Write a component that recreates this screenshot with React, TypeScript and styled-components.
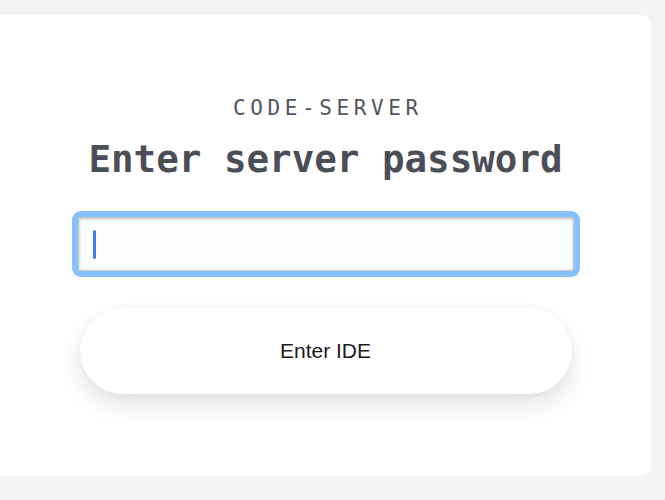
import React from "react";
import styled, { createGlobalStyle } from "styled-components";

const GlobalStyle = createGlobalStyle`
  html, body {
    margin: 0;
    padding: 0;
    background: #f4f4f4;
  }
  * { box-sizing: border-box; }
`;

const Page = styled.div`
  width: 665px;
  height: 500px;
  padding-top: 15px;
  overflow: hidden;
`;

const Card = styled.main`
  width: 651px;
  height: 461px;
  background: #ffffff;
  border-radius: 0 10px 10px 0;
  display: flex;
  flex-direction: column;
  align-items: center;
  padding-top: 81px;
`;

const Brand = styled.div`
  font-family: "DejaVu Sans Mono", "Liberation Mono", monospace;
  font-size: 21px;
  line-height: 24px;
  letter-spacing: 4.6px;
  margin-right: -4.6px;
  color: #53565f;
`;

const Heading = styled.h1`
  margin: 16px 0 0;
  font-family: "DejaVu Sans Mono", "Liberation Mono", monospace;
  font-weight: 700;
  font-size: 37.5px;
  line-height: 46px;
  color: #4b4e56;
`;

const Ring = styled.div`
  margin-top: 29px;
  padding: 6px;
  border-radius: 9px;
  background: #88c0fc;
`;

const Field = styled.label`
  width: 496px;
  height: 54px;
  display: flex;
  align-items: center;
  padding-left: 14px;
  background: #fdfdfd;
  border: 1px solid #c9c9c9;
  box-shadow: inset 0 1px 3px rgba(0, 0, 0, 0.28);
  border-radius: 2px;
`;

const Caret = styled.span`
  width: 3px;
  height: 29px;
  border-radius: 2px;
  background: #3581f4;
  flex: none;
`;

const Input = styled.input`
  flex: 1;
  height: 100%;
  border: none;
  outline: none;
  background: transparent;
  font-size: 20px;
  caret-color: transparent;
`;

const Submit = styled.button`
  margin-top: 31px;
  width: 492px;
  height: 86px;
  border: none;
  border-radius: 43px;
  background: #ffffff;
  box-shadow: 0 12px 26px rgba(0, 0, 0, 0.1), 0 2px 8px rgba(0, 0, 0, 0.04);
  font-family: "Liberation Sans", Arial, sans-serif;
  font-size: 21px;
  color: #1b1b1b;
  cursor: pointer;
`;

export default function App() {
  return (
    <Page>
      <GlobalStyle />
      <Card>
        <Brand>CODE-SERVER</Brand>
        <Heading>Enter server password</Heading>
        <Ring>
          <Field>
            <Caret />
            <Input type="password" aria-label="Password" />
          </Field>
        </Ring>
        <Submit type="button">Enter IDE</Submit>
      </Card>
    </Page>
  );
}
